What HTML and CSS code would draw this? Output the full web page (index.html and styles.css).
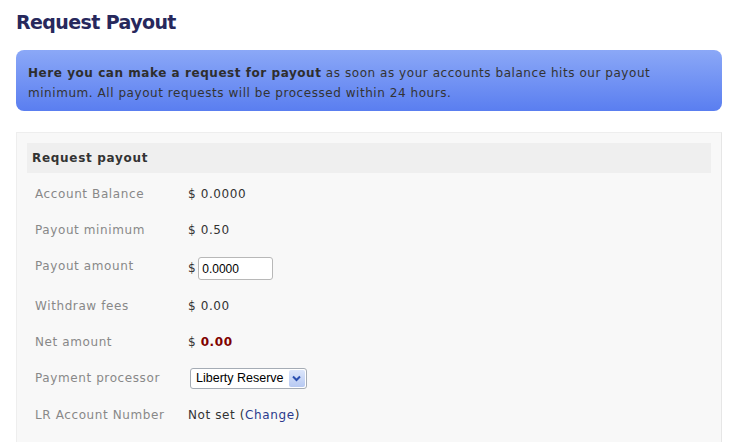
FILE: index.html
```html
<!DOCTYPE html>
<html>
<head>
  <title>Request Payout</title>
  <link rel="stylesheet" href="styles.css">
</head>
<body>
  <h1>Request Payout</h1>

  <div class="notice">
    <strong>Here you can make a request for payout</strong> as soon as your accounts balance hits our payout
    minimum. All payout requests will be processed within 24 hours.
  </div>

  <div class="panel">
    <h2>Request payout</h2>
    <table class="details">
      <tr>
        <td class="label">Account Balance</td>
        <td>$ 0.0000</td>
      </tr>
      <tr>
        <td class="label">Payout minimum</td>
        <td>$ 0.50</td>
      </tr>
      <tr class="tall">
        <td class="label">Payout amount</td>
        <td class="field">$<input type="text" class="amount" value="0.0000"></td>
      </tr>
      <tr>
        <td class="label">Withdraw fees</td>
        <td>$ 0.00</td>
      </tr>
      <tr>
        <td class="label">Net amount</td>
        <td>$ <span class="net">0.00</span></td>
      </tr>
      <tr class="choice">
        <td class="label">Payment processor</td>
        <td>
          <div class="select">
            <span>Liberty Reserve</span>
            <span class="arrow">
              <svg width="9" height="7" viewBox="0 0 9 7"><path d="M1 1.5 L4.5 5 L8 1.5" fill="none" stroke="#2a4fb0" stroke-width="2"/></svg>
            </span>
          </div>
        </td>
      </tr>
      <tr>
        <td class="label">LR Account Number</td>
        <td>Not set (<a href="#">Change</a>)</td>
      </tr>
    </table>
  </div>
</body>
</html>
```

FILE: styles.css
```css
body {
  font-family: "DejaVu Sans", Verdana, sans-serif;
  margin: 0;
  padding: 0 11px 0 16px;
  background: #fff;
  color: #333;
}

h1 {
  margin: 0;
  padding-top: 10px;
  font-size: 19px;
  line-height: 24px;
  letter-spacing: -0.6px;
  color: #27285c;
}

.notice {
  margin-top: 16px;
  padding: 13px 40px 8px 12px;
  background: linear-gradient(#8ba8f7, #5a7ef0);
  border-radius: 8px;
  font-size: 12px;
  line-height: 20px;
  letter-spacing: 0.55px;
  color: #333;
}

.notice strong {
  color: #2e2e2e;
}

.panel {
  margin-top: 21px;
  padding: 10px 10px 20px 10px;
  background: #f8f8f8;
  border: 1px solid #eee;
  border-right-color: #e6e6e6;
}

.panel h2 {
  margin: 0;
  padding: 0 5px;
  background: #efefef;
  font-size: 12px;
  line-height: 30px;
  letter-spacing: 0.7px;
  color: #333;
}

.details {
  border-collapse: collapse;
  margin-top: 3px;
  font-size: 12px;
  letter-spacing: 0.6px;
}

.details td {
  padding: 9px 0;
  line-height: 18px;
  vertical-align: top;
  color: #333;
}

.details tr.tall td {
  padding-bottom: 8px;
}

.details td.field {
  line-height: 23px;
}

.details tr.choice td {
  padding: 8px 0;
}

.details td.label {
  width: 153px;
  padding-left: 8px;
  color: #888;
}

.details tr.choice td.label {
  padding: 9px 0 10px 8px;
}

.amount {
  box-sizing: border-box;
  width: 75px;
  height: 23px;
  margin: 0 0 0 2px;
  padding: 1px 3px;
  border: 1px solid #b8b8b8;
  border-radius: 3px;
  font-family: "Liberation Sans", Arial, sans-serif;
  font-size: 12px;
  color: #000;
  vertical-align: top;
}

.net {
  font-weight: bold;
  color: #800000;
}

.select {
  box-sizing: border-box;
  display: inline-flex;
  align-items: center;
  gap: 5px;
  margin-left: 2px;
  padding: 1px 1px 1px 5px;
  height: 21px;
  border: 1px solid #a5acb5;
  border-radius: 3px;
  background: #fff;
  font-family: "Liberation Sans", Arial, sans-serif;
  font-size: 12.5px;
  line-height: 17px;
  letter-spacing: 0;
  color: #000;
  vertical-align: top;
}

.arrow {
  display: flex;
  align-items: center;
  justify-content: center;
  width: 16px;
  height: 17px;
  border-radius: 2px;
  background: linear-gradient(#dce6fb, #b7c9f2);
}

a {
  color: #2a3a8c;
  text-decoration: none;
}
```
